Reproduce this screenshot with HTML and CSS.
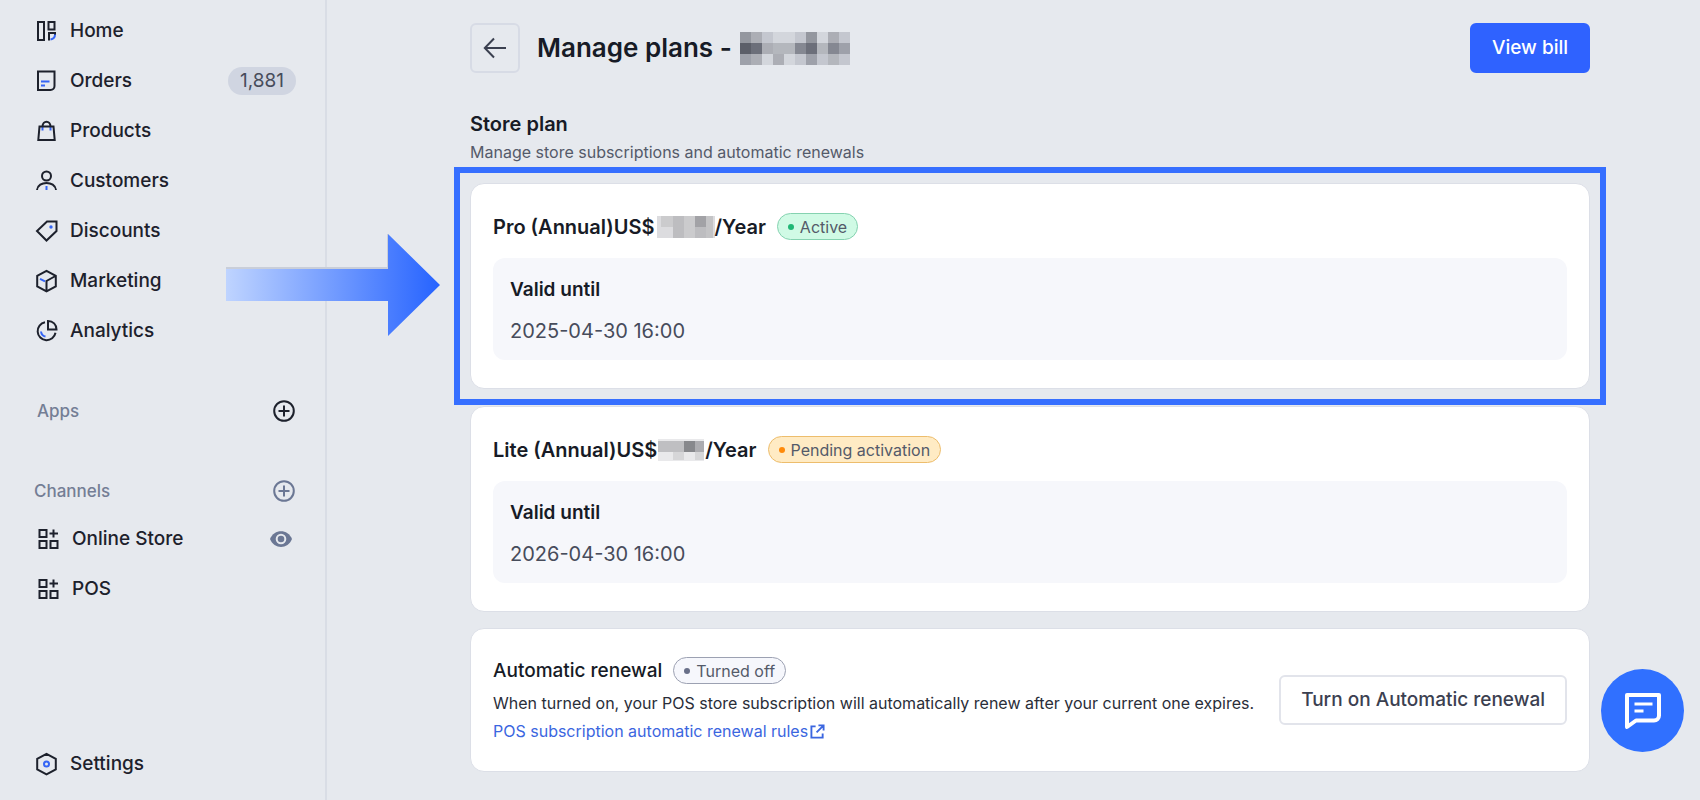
FILE: index.html
```html
<!DOCTYPE html>
<html lang="en">
<head>
<meta charset="utf-8">
<title>Manage plans</title>
<link rel="stylesheet" href="styles.css">
</head>
<body>
<div class="app">
  <aside class="sidebar">
    <nav class="nav" aria-label="Main">
      <a class="nav-item" href="#home">
        <svg class="icon" viewBox="0 0 24 24"><path d="M3 3h6v18H3zM13.500 3h6v7.500h-6zM14 21.500v-7.500h6v2"/><path class="accent" d="M20 15.500c0 3-1.500 4.500-4.500 5"/></svg>
        Home
      </a>
      <a class="nav-item" href="#orders">
        <svg class="icon" viewBox="0 0 24 24"><path d="M3 2.500h16.500v14.500a4 4 0 0 1-4 4H3z"/><path class="accent" d="M6 12.500h8.500M6 16.500h4"/></svg>
        Orders
        <span class="count">1,881</span>
      </a>
      <a class="nav-item" href="#products">
        <svg class="icon" viewBox="0 0 24 24"><path class="accent" d="M7.500 8v3.500M15.500 8v3.500"/><path d="M4.500 7.500h14l1.200 13.500h-16.400zM7.500 7.500c0-6.500 8-6.500 8 0"/></svg>
        Products
      </a>
      <a class="nav-item" href="#customers">
        <svg class="icon" viewBox="0 0 24 24"><circle cx="11.500" cy="7" r="4.500"/><path d="M2 21c1-9.500 18-9.500 19 0"/><path class="accent" d="M11.500 17v4"/></svg>
        Customers
      </a>
      <a class="nav-item" href="#discounts">
        <svg class="icon" viewBox="0 0 24 24"><path d="M12 2.500h9.500v9.500l-10 9.500-9.500-9.500z"/><circle class="accent-dot" cx="16" cy="8" r="1.700"/></svg>
        Discounts
      </a>
      <a class="nav-item" href="#marketing">
        <svg class="icon" viewBox="0 0 24 24"><path class="accent" d="M5 9.800l5 2.500"/><path d="M11.500 1.800l9.300 5v10.500l-9.300 5-9.300-5v-10.500zM11.500 22v-10l9-5"/></svg>
        Marketing
      </a>
      <a class="nav-item" href="#analytics">
        <svg class="icon" viewBox="0 0 24 24"><path d="M10 3.300a9 9 0 1 0 10.500 10.500M13 2v8.500h8.500c0-5-3.500-8.500-8.500-8.500z"/><path class="accent" d="M6 12.500c.3 2.500 2 4.500 4.500 5"/></svg>
        Analytics
      </a>
    </nav>

    <section class="group">
      <div class="group-head group-head-apps">
        <h2 class="group-title">Apps</h2>
        <button class="icon-button strong" type="button" aria-label="Add app">
          <svg class="icon" viewBox="0 0 24 24"><circle cx="12" cy="12" r="9.800"/><path d="M12 6.500v11M6.500 12h11"/></svg>
        </button>
      </div>
    </section>

    <section class="group">
      <div class="group-head">
        <h2 class="group-title">Channels</h2>
        <button class="icon-button" type="button" aria-label="Add channel">
          <svg class="icon" viewBox="0 0 24 24"><circle cx="12" cy="12" r="9.800"/><path d="M12 6.500v11M6.500 12h11"/></svg>
        </button>
      </div>
      <nav class="nav nav-channels" aria-label="Channels">
        <div class="channel-row">
          <a class="nav-item" href="#online-store">
            <svg class="icon" viewBox="0 0 24 24"><path d="M2.500 3h7v7h-7zM2.500 14h7v7h-7zM13.500 14h7v7h-7zM16.500 2.500v8M12.500 6.500h8.500"/></svg>
            Online Store
          </a>
          <button class="icon-button" type="button" aria-label="View store">
            <svg class="icon" viewBox="0 0 24 24"><path fill="#6b7794" stroke="none" d="M1 12C5 1.500 19 1.500 23 12 19 22.500 5 22.500 1 12z"/><circle cx="12" cy="12" r="4.300" stroke="#e6e9ee"/></svg>
          </button>
        </div>
        <a class="nav-item" href="#pos">
          <svg class="icon" viewBox="0 0 24 24"><path d="M2.500 3h7v7h-7zM2.500 14h7v7h-7zM13.500 14h7v7h-7zM16.500 2.500v8M12.500 6.500h8.500"/></svg>
          POS
        </a>
      </nav>
    </section>

    <a class="nav-item settings" href="#settings">
      <svg class="icon" viewBox="0 0 24 24"><path d="M11.500 1.800l9.300 5v10.500l-9.300 5-9.300-5v-10.500z"/><circle class="accent" cx="11.500" cy="12" r="2.500"/></svg>
      Settings
    </a>
  </aside>

  <main class="main">
    <header class="page-head">
      <button class="back" type="button" aria-label="Back">
        <svg class="icon" viewBox="0 0 24 24"><path d="M23 12H2M11 2.500L1.800 12l9.200 9.500"/></svg>
      </button>
      <h1 class="page-title">Manage plans -
        <svg class="mosaic-title" viewBox="0 0 10 3" preserveAspectRatio="none" shape-rendering="crispEdges" aria-hidden="true">
          <path fill="#c4c7cf" d="M0 0h10v3H0z"/>
          <path fill="#94979f" d="M0 0h1v1H0zM6 0h1v1H6z"/><path fill="#acaeb5" d="M1 0h1v1H1zM8 0h1v1H8zM3 2h1v1H3zM1 2h1v1H1zM2 1h1v1H2z"/>
          <path fill="#d3d6dc" d="M3 0h2v1H3zM7 0h1v1H7zM2 2h1v1H2zM4 2h1v1H4z"/><path fill="#5c5f69" d="M0 1h1v1H0z"/><path fill="#6c6f7a" d="M1 1h1v1H1zM6 1h1v1H6z"/>
          <path fill="#b4b7bd" d="M3 1h2v1H3zM7 1h1v1H7zM8 2h1v1H8z"/><path fill="#858892" d="M5 1h1v1H5zM8 1h1v1H8z"/><path fill="#9ea1aa" d="M9 1h1v1H9zM0 2h1v1H0zM6 2h1v1H6z"/>
        </svg>
      </h1>
      <button class="button primary" type="button">View bill</button>
    </header>

    <section class="plans">
      <h2 class="section-title">Store plan</h2>
      <p class="section-note">Manage store subscriptions and automatic renewals</p>

      <div class="highlight">
        <article class="card">
          <div class="plan-head">
            <h3 class="plan-name">Pro (Annual)US$<svg class="mosaic-price" viewBox="0 0 60 22" preserveAspectRatio="none" aria-hidden="true"><path fill="#dcdcdf" d="M2 0h58v22H2z"/><path fill="#cbcbcd" d="M6 0h12v11H6zM29 0h11v22H29z"/><path fill="#bdbdc0" d="M18 0h11v22H18zM40 11h11v11H40z"/><path fill="#a2a2a6" d="M40 0h11v11H40z"/><path fill="#c4c4c6" d="M51 0h7v22h-7z"/></svg>/Year</h3>
            <span class="badge active">Active</span>
          </div>
          <dl class="validity">
            <dt>Valid until</dt>
            <dd>2025-04-30 16:00</dd>
          </dl>
        </article>
      </div>

      <article class="card">
        <div class="plan-head">
          <h3 class="plan-name">Lite (Annual)US$<svg class="mosaic-price short" viewBox="0 0 48 22" preserveAspectRatio="none" aria-hidden="true"><path fill="#e9e9eb" d="M1 0h46v22H1z"/><path fill="#bfbfc2" d="M1 2h26v11H1z"/><path fill="#87888c" d="M27 2h11v11H27z"/><path fill="#acacb0" d="M38 2h9v11h-9z"/><path fill="#d6d6d8" d="M16 13h11v8H16zM38 13h9v8h-9z"/></svg>/Year</h3>
          <span class="badge pending">Pending activation</span>
        </div>
        <dl class="validity">
          <dt>Valid until</dt>
          <dd>2026-04-30 16:00</dd>
        </dl>
      </article>

      <article class="card renewal">
        <div class="renewal-text">
          <div class="plan-head">
            <h3 class="renewal-name">Automatic renewal</h3>
            <span class="badge off">Turned off</span>
          </div>
          <p class="renewal-note">When turned on, your POS store subscription will automatically renew after your current one expires.</p>
          <a class="link" href="#rules">POS subscription automatic renewal rules<svg class="icon-link" viewBox="0 0 16 16" aria-hidden="true"><path d="M6 2.500H1.500v12h12V10M9 1.500h5.500V7M14.500 1.500L7 9"/></svg></a>
        </div>
        <button class="button" type="button">Turn on Automatic renewal</button>
      </article>
    </section>
  </main>
</div>

<svg class="pointer" viewBox="0 0 214 102" aria-hidden="true">
  <defs><linearGradient id="fade"><stop offset="0" stop-color="#bfd4ff"/><stop offset="1" stop-color="#2663ff"/></linearGradient></defs>
  <path fill="#c9ced9" d="M0 33h161V0h1v35H0z"/>
  <path fill="url(#fade)" d="M0 35h162V0l52 51-52 51V67H0z"/>
</svg>

<button class="chat" type="button" aria-label="Open chat">
  <svg class="chat-icon" viewBox="0 0 38 38"><path d="M3 3h32v20.500a5 5 0 0 1-5 5H12l-9 6.500z"/><path class="chat-lines" d="M10.500 12h18M10.500 19h9"/></svg>
</button>
</body>
</html>
```
FILE: styles.css
```css
* {
  box-sizing: border-box;
}

body {
  margin: 0;
  background: #e6e9ee;
  color: #171b26;
  font-family: Inter, "Liberation Sans", sans-serif;
  font-size: 19px;
  line-height: 24px;
}

h1, h2, h3, p, dl, dd {
  margin: 0;
}

button {
  font: inherit;
  cursor: pointer;
}

.app {
  display: grid;
  grid-template-columns: 327px 1fr;
  min-height: 100vh;
}

.sidebar {
  display: flex;
  flex-direction: column;
  padding: 6px 29px 11px 34px;
  border-right: 2px solid #d9dde5;
}

.nav {
  display: flex;
  flex-direction: column;
}

.nav-item {
  display: flex;
  align-items: center;
  gap: 11px;
  height: 50px;
  padding-left: 1px;
  color: #1d212c;
  font-weight: 500;
  text-decoration: none;
}

.icon {
  display: block;
  flex: none;
  width: 24px;
  height: 24px;
  fill: none;
  stroke: currentColor;
  stroke-width: 2;
}

.icon .accent {
  stroke: #3565f5;
}

.icon .accent-dot {
  fill: #3565f5;
  stroke: none;
}

.count {
  margin-left: auto;
  padding: 2px 12px;
  border-radius: 14px;
  background: #d0d5e1;
  color: #474c5b;
  font-size: 19px;
  font-weight: 400;
}

.group-head {
  display: flex;
  align-items: center;
  justify-content: space-between;
  height: 24px;
}

.group {
  margin-top: 56px;
}

.nav + .group {
  margin-top: 43px;
}

.group-head-apps {
  padding-left: 3px;
}

.group-title {
  color: #747e95;
  font-size: 17px;
  font-weight: 500;
}

.icon-button {
  padding: 0;
  border: 0;
  background: none;
  color: #6b7794;
}

.icon-button.strong {
  color: #1d212c;
}

.nav-channels {
  margin-top: 11px;
  padding-left: 2px;
}

.channel-row {
  display: flex;
  align-items: center;
  justify-content: space-between;
  padding-right: 3px;
}

.settings {
  margin-top: auto;
}

.main {
  padding: 23px 110px 27px 143px;
}

.page-head {
  display: flex;
  align-items: center;
  gap: 17px;
}

.back {
  display: grid;
  place-items: center;
  width: 50px;
  height: 50px;
  border: 2px solid #d7dbe5;
  border-radius: 6px;
  background: transparent;
  color: #3b4050;
}

.page-title {
  display: flex;
  align-items: center;
  gap: 8px;
  margin-right: auto;
  font-size: 26px;
  font-weight: 600;
  line-height: 34px;
}

.mosaic-title {
  width: 110px;
  height: 33px;
}

.button {
  flex: none;
  height: 50px;
  padding: 0 20px;
  border: 2px solid #e2e4eb;
  border-radius: 6px;
  background: #fff;
  color: #3b4050;
  font-weight: 500;
}

.button.primary {
  border-color: #2f62ff;
  background: #2f62ff;
  color: #fff;
}

.section-title {
  margin-top: 39px;
  font-size: 20px;
  font-weight: 600;
}

.section-note {
  margin-top: 4px;
  color: #545a69;
  font-size: 16px;
}

.card {
  margin-top: 17px;
  padding: 29px 22px 28px;
  border: 1px solid #dcdfe7;
  border-radius: 14px;
  background: #fff;
}

.highlight {
  margin-top: 19px;
  outline: 6px solid #366fff;
  outline-offset: 10px;
}

.highlight .card {
  margin-top: 0;
}

.plan-head {
  display: flex;
  align-items: center;
  gap: 11px;
}

.plan-name {
  display: flex;
  align-items: center;
  font-size: 20px;
  font-weight: 600;
}

.mosaic-price {
  width: 60px;
  height: 22px;
}

.mosaic-price.short {
  width: 48px;
}

.badge {
  display: inline-flex;
  align-items: center;
  gap: 6px;
  height: 27px;
  padding: 0 10px;
  border: 1px solid;
  border-radius: 14px;
  color: #545a69;
  font-size: 16px;
}

.badge::before {
  content: "";
  width: 6px;
  height: 6px;
  border-radius: 50%;
}

.active {
  border-color: #85d2b0;
  background: #d0fae5;
}

.active::before {
  background: #20b775;
}

.pending {
  border-color: #edbd6c;
  background: #ffebc4;
}

.pending::before {
  background: #ff8a0a;
}

.off {
  border-color: #9ca1b2;
  background: #f6f7fc;
}

.off::before {
  background: #686f88;
}

.validity {
  margin-top: 18px;
  padding: 20px 17px 17px;
  border-radius: 12px;
  background: #f6f7fb;
}

.validity dt {
  font-size: 19px;
  font-weight: 600;
}

.validity dd {
  margin-top: 17px;
  color: #474c5b;
  font-size: 20px;
}

.renewal {
  display: flex;
  align-items: center;
  justify-content: space-between;
  margin-top: 16px;
  padding-top: 28px;
}

.renewal-name {
  font-size: 19px;
  font-weight: 500;
}

.renewal-note {
  margin-top: 7px;
  color: #2a2e39;
  font-size: 16px;
}

.link {
  display: inline-flex;
  align-items: center;
  gap: 2px;
  margin-top: 4px;
  color: #3b66e0;
  font-size: 16px;
  text-decoration: none;
}

.icon-link {
  width: 15px;
  height: 15px;
  fill: none;
  stroke: currentColor;
  stroke-width: 2;
}

.pointer {
  position: absolute;
  top: 234px;
  left: 226px;
  width: 214px;
  height: 102px;
  pointer-events: none;
}

.chat {
  position: fixed;
  right: 16px;
  bottom: 48px;
  display: grid;
  place-items: center;
  width: 83px;
  height: 83px;
  padding: 0;
  border: 0;
  border-radius: 50%;
  background: #3070ff;
}

.chat-icon {
  width: 38px;
  height: 38px;
  fill: none;
  stroke: #fff;
  stroke-width: 4;
  stroke-linejoin: round;
}

.chat-lines {
  stroke-width: 3;
}
```
